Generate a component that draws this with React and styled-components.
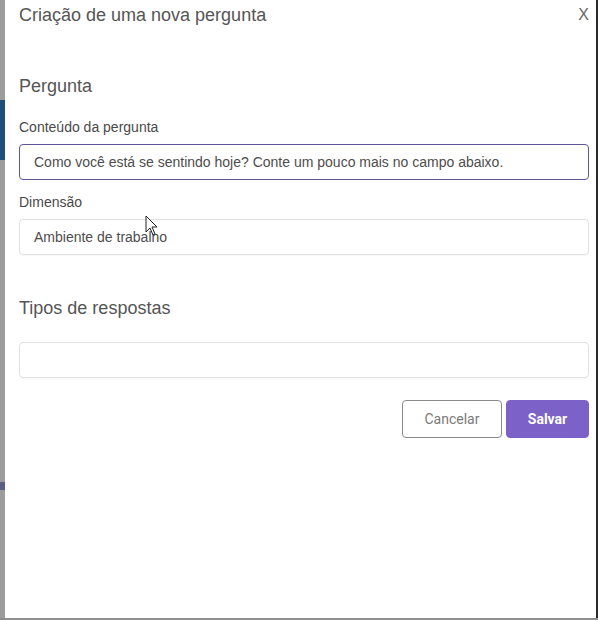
import React from "react";
import styled, { createGlobalStyle } from "styled-components";

const Global = createGlobalStyle`
  html, body { margin: 0; padding: 0; background: #ffffff; }
  body { font-family: "Liberation Sans", Arial, sans-serif; }
  * { box-sizing: border-box; }
`;

const Page = styled.div`
  width: 598px;
  height: 620px;
  display: flex;
  flex-direction: column;
  overflow: hidden;
`;

const Row = styled.div`
  flex: 1;
  display: flex;
`;

const Backdrop = styled.div`
  width: 5px;
  background: #9c9c9c;
  display: flex;
  flex-direction: column;
`;

const BackdropBlock = styled.div`
  margin-top: ${(p) => p.$top}px;
  height: ${(p) => p.$h}px;
  background: ${(p) => p.$color};
`;

const RightEdge = styled.div`
  width: 2px;
  background: #2a2a2a;
`;

const BottomEdge = styled.div`
  height: 2px;
  background: #8e8e8e;
`;

const Modal = styled.div`
  flex: 1;
  background: #ffffff;
  padding: 5px 7px 0 14px;
  display: flex;
  flex-direction: column;
  position: relative;
`;

const Header = styled.div`
  display: flex;
  justify-content: space-between;
  align-items: center;
  height: 20px;
`;

const Title = styled.h1`
  margin: 0;
  font-size: 18px;
  font-weight: 400;
  color: #555555;
  line-height: 20px;
`;

const Close = styled.button`
  border: none;
  background: none;
  padding: 0;
  margin-right: 0;
  font-family: "Liberation Sans", Arial, sans-serif;
  font-size: 16px;
  color: #666666;
  line-height: 20px;
  cursor: pointer;
`;

const Section = styled.h2`
  margin: ${(p) => p.$mt}px 0 0;
  font-size: 18px;
  font-weight: 400;
  color: #555555;
  line-height: 20px;
`;

const Label = styled.label`
  display: block;
  margin-top: ${(p) => p.$mt}px;
  font-size: 14px;
  color: #4a4a4a;
  line-height: 16px;
`;

const Field = styled.div`
  margin-top: ${(p) => p.$mt}px;
  height: 36px;
  border: 1px solid ${(p) => (p.$focus ? "#5f5499" : "#e0e0e0")};
  border-radius: 4px;
  display: flex;
  align-items: center;
  padding: 0 14px;
  font-size: 14px;
  color: #4d4d4d;
  box-shadow: ${(p) => (p.$focus ? "none" : "0 1px 1px rgba(0,0,0,0.03)")};
`;

const Actions = styled.div`
  margin-top: 22px;
  display: flex;
  justify-content: flex-end;
  gap: 4px;
`;

const Button = styled.button`
  height: 38px;
  width: ${(p) => p.$w}px;
  border-radius: 4px;
  font-family: Roboto, "Liberation Sans", sans-serif;
  font-size: 14px;
  font-weight: ${(p) => (p.$primary ? 700 : 400)};
  color: ${(p) => (p.$primary ? "#ffffff" : "#7a7a7a")};
  background: ${(p) => (p.$primary ? "#7b61c8" : "#ffffff")};
  border: 1px solid ${(p) => (p.$primary ? "#7b61c8" : "#8a8a8a")};
  cursor: pointer;
`;

const Cursor = styled.svg`
  position: absolute;
  left: 140px;
  top: 215px;
`;

export default function App() {
  return (
    <>
      <Global />
      <Page>
        <Row>
          <Backdrop>
            <BackdropBlock $top={100} $h={60} $color="#1e4f7a" />
            <BackdropBlock $top={322} $h={8} $color="#5a5f8a" />
          </Backdrop>
          <Modal>
            <Header>
              <Title>Criação de uma nova pergunta</Title>
              <Close>X</Close>
            </Header>
            <Section $mt={51}>Pergunta</Section>
            <Label $mt={23}>Conteúdo da pergunta</Label>
            <Field $mt={9} $focus>
              Como você está se sentindo hoje? Conte um pouco mais no campo abaixo.
            </Field>
            <Label $mt={14}>Dimensão</Label>
            <Field $mt={9}>Ambiente de trabalho</Field>
            <Section $mt={43}>Tipos de respostas</Section>
            <Field $mt={24} />
            <Actions>
              <Button $w={100}>Cancelar</Button>
              <Button $w={83} $primary>Salvar</Button>
            </Actions>
            <Cursor width="14" height="22" viewBox="0 0 14 22">
              <path d="M1 1 L1 17 L5 13 L8 20 L10 19 L7 12 L12 12 Z" fill="#ffffff" stroke="#222" strokeWidth="1" />
            </Cursor>
          </Modal>
          <RightEdge />
        </Row>
        <BottomEdge />
      </Page>
    </>
  );
}
